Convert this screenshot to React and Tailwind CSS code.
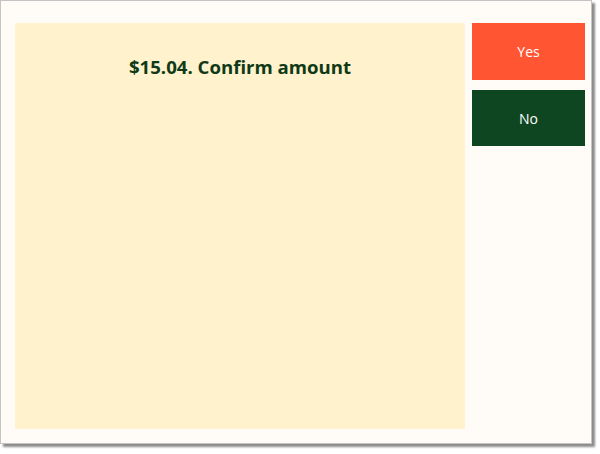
export default function App() {
  return (
    <div className="w-[600px] h-[454px] bg-white">
      <div
        className="w-[592px] h-[444px] border border-[#c4c4c4] bg-[#fffbf6] shadow-[3px_3px_2px_rgba(0,0,0,0.45)] flex pl-[14px] pt-[22px] pr-[6px] pb-[14px] gap-[7px]"
        style={{ fontFamily: '"Open Sans", "Noto Sans", sans-serif' }}
      >
        <div className="w-[451px] h-[406px] bg-[#fff2cc] flex justify-center pt-[30px]">
          <h1 className="text-[18.6px] leading-[28px] font-bold text-[#0f3a17]">
            $15.04. Confirm amount
          </h1>
        </div>
        <div className="flex flex-col gap-[10px]">
          <button className="w-[113px] h-[57px] bg-[#ff5533] text-white text-[14px] flex items-center justify-center">
            Yes
          </button>
          <button className="w-[113px] h-[56px] bg-[#0f4622] text-white text-[14px] flex items-center justify-center">
            No
          </button>
        </div>
      </div>
    </div>
  );
}
